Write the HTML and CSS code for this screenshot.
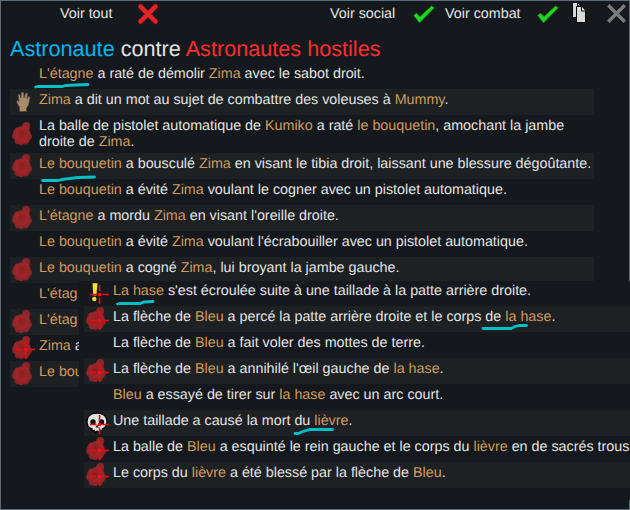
FILE: index.html
```
<!DOCTYPE html>
<html lang="fr">
<head>
<meta charset="utf-8">
<title>Journal de combat</title>
<link rel="stylesheet" href="styles.css">
</head>
<body>
<svg width="0" height="0" class="defs">
  <defs>
    <radialGradient id="bloodFill"><stop offset="0" stop-color="#8c1f22"/><stop offset=".6" stop-color="#9c2629"/><stop offset="1" stop-color="#8a2428"/></radialGradient>
    <symbol id="blood" viewBox="0 0 26 26">
      <path d="M12.500 5.500C12.300 2.800 14 1.300 16.500 1.300C19.200 1.300 20.300 3.500 19.600 6C19.500 7.500 18.800 8 19.200 9.500C20.300 10.500 19.800 12 20.500 13C22 14.500 21.800 17.500 19.800 18.800C18.800 20 18.800 21 17.800 22.200C16.500 23.800 15 22.800 13.800 22.500C12.500 24.300 10 24 9 22.800C7.500 23.600 5 22.600 5.200 20.500C5.300 19.500 4.500 18.500 4 17.800C2.300 17 2 14.500 3 13C3.300 11.800 3.500 10.500 4.300 9.500C4.800 7.300 6.500 6.600 8.200 6.800C9.500 5.600 11 5.500 12.500 5.500Z" fill="url(#bloodFill)" stroke="#8a2428" stroke-width=".8"/>
    </symbol>
    <symbol id="hand" viewBox="0 0 26 26">
      <path d="M9.500 22.500V18.500L6.800 13.500Q6.200 11.500 7.800 11.500L9 12.500L8 6Q8.400 4.400 9.800 5.400L11 9L11.200 3.800Q12.400 2.300 13.700 3.800L14 9L15.500 4.300Q17 3.300 17.500 5L17 10L18.300 7.300Q20 6.800 20 8.700L18.500 16L16.500 19V22.500Z" fill="#a98a6b" stroke="#4a3c30" stroke-width=".6"/>
    </symbol>
    <symbol id="alert" viewBox="0 0 26 26">
      <path d="M8.500 3.300H13.500L12.400 15.500H9.300Z" fill="#fbdf35"/><circle cx="10.300" cy="19" r="2.200" fill="#fbd535"/>
    </symbol>
    <symbol id="skull" viewBox="0 0 26 26">
      <path d="M13 3C6.500 3 3 6.500 3 11.500C3 15.500 5 18 8 18.800L8.500 21.500L10 20.500L11.500 22.500L13.200 21L15 22.500L16.500 20.500L18 21.500L18.500 18.800C21.500 18 23 15.500 23 11.500C23 6.500 19 3 13 3Z" fill="#e2e2e2" stroke="#050505" stroke-width="1.300"/>
      <circle cx="9" cy="12" r="2.700" fill="#080808"/><circle cx="17.500" cy="12" r="2.700" fill="#080808"/><path d="M13.200 14.500L11.500 17.500H14.800Z" fill="#111"/>
    </symbol>
    <symbol id="cross" viewBox="0 0 26 26">
      <rect x="14.800" y="5" width="1.600" height="6.500" fill="#ec0a0e"/>
      <rect x="14.800" y="17.500" width="1.600" height="6.500" fill="#ec0a0e"/>
      <rect x="6" y="13.700" width="6.500" height="1.600" fill="#ec0a0e"/>
      <rect x="18.500" y="13.700" width="6.500" height="1.600" fill="#ec0a0e"/>
      <rect x="14" y="13" width="3" height="3" fill="#f80c10"/>
    </symbol>
    <symbol id="check" viewBox="0 0 24 22">
      <path d="M1.500 11.500L4.500 9L8 12.500L19.500 1.800L22.500 3.800L7.500 19Z" fill="#22d722" stroke="#0c6513" stroke-width=".9"/>
    </symbol>
  </defs>
</svg>
<main class="window">
  <header class="bar">
    <span class="label all">Voir tout</span>
    <svg class="no" viewBox="0 0 22 22"><path d="M3.500 3.500L18.500 18.500M18.500 3.500L3.500 18.500" stroke="#6e1215" stroke-width="5.600" stroke-linecap="round"/><path d="M3.500 3.500L18.500 18.500M18.500 3.500L3.500 18.500" stroke="#df2528" stroke-width="4.200" stroke-linecap="round"/></svg>
    <span class="label social">Voir social</span>
    <svg class="yes"><use href="#check"/></svg>
    <span class="label combat">Voir combat</span>
    <svg class="yes"><use href="#check"/></svg>
    <svg class="copy" viewBox="0 0 14 21"><path d="M.5 .5H5.500L9 4V15.500H.5Z" fill="#d6d6d6" stroke="#000"/><path d="M5.500 .5V4H9" fill="none" stroke="#000"/><path d="M4.500 4.500H9.500L13.500 9V20.500H4.500Z" fill="#dadada" stroke="#000"/><path d="M9.500 4.500V9H13.500" fill="#eee" stroke="#000"/></svg>
    <svg class="close" viewBox="0 0 19 19"><path d="M2.500 2.500L16.500 16.500M16.500 2.500L2.500 16.500" stroke="#7b7c7e" stroke-width="3.400" stroke-linecap="square"/></svg>
  </header>
  <h1 class="title"><span class="ally">Astronaute</span> contre <span class="foe">Astronautes hostiles</span></h1>
  <section class="log">
    <div class="row"><i class="icon"></i><p><b>L'étagne</b> a raté de démolir <b>Zima</b> avec le sabot droit.</p></div>
    <div class="row alt"><svg class="icon"><use href="#hand"/></svg><p><b>Zima</b> a dit un mot au sujet de combattre des voleuses à <b>Mummy</b>.</p></div>
    <div class="row tall"><svg class="icon"><use href="#blood"/></svg><p>La balle de pistolet automatique de <b>Kumiko</b> a raté <b>le bouquetin</b>, amochant la jambe<br>droite de <b>Zima</b>.</p></div>
    <div class="row alt"><svg class="icon"><use href="#blood"/></svg><p><b>Le bouquetin</b> a bousculé <b>Zima</b> en visant le tibia droit, laissant une blessure dégoûtante.</p></div>
    <div class="row"><i class="icon"></i><p><b>Le bouquetin</b> a évité <b>Zima</b> voulant le cogner avec un pistolet automatique.</p></div>
    <div class="row alt"><svg class="icon"><use href="#blood"/></svg><p><b>L'étagne</b> a mordu <b>Zima</b> en visant l'oreille droite.</p></div>
    <div class="row"><i class="icon"></i><p><b>Le bouquetin</b> a évité <b>Zima</b> voulant l'écrabouiller avec un pistolet automatique.</p></div>
    <div class="row alt"><svg class="icon"><use href="#blood"/></svg><p><b>Le bouquetin</b> a cogné <b>Zima</b>, lui broyant la jambe gauche.</p></div>
    <div class="row cut"><i class="icon"></i><p><b>L'étag</b></p></div>
    <div class="row alt cut"><svg class="icon"><use href="#blood"/></svg><p><b>L'étag</b></p></div>
    <div class="row cut"><svg class="icon"><use href="#blood"/><use href="#cross"/></svg><p><b>Zima</b> a</p></div>
    <div class="row alt cut"><svg class="icon"><use href="#blood"/></svg><p><b>Le bou</b></p></div>
  </section>
</main>
<section class="overlay">
  <div class="row"><svg class="icon"><use href="#alert"/><use href="#cross"/></svg><p><b>La hase</b> s'est écroulée suite à une taillade à la patte arrière droite.</p></div>
  <div class="row alt"><svg class="icon"><use href="#blood"/><use href="#cross"/></svg><p>La flèche de <b>Bleu</b> a percé la patte arrière droite et le corps de <b>la hase</b>.</p></div>
  <div class="row"><i class="icon"></i><p>La flèche de <b>Bleu</b> a fait voler des mottes de terre.</p></div>
  <div class="row alt"><svg class="icon"><use href="#blood"/><use href="#cross"/></svg><p>La flèche de <b>Bleu</b> a annihilé l'œil gauche de <b>la hase</b>.</p></div>
  <div class="row"><i class="icon"></i><p><b>Bleu</b> a essayé de tirer sur <b>la hase</b> avec un arc court.</p></div>
  <div class="row alt"><svg class="icon"><use href="#skull"/><use href="#cross"/></svg><p>Une taillade a causé la mort du <b>lièvre</b>.</p></div>
  <div class="row"><svg class="icon"><use href="#blood"/><use href="#cross"/></svg><p>La balle de <b>Bleu</b> a esquinté le rein gauche et le corps du <b>lièvre</b> en de sacrés trous</p></div>
  <div class="row alt"><svg class="icon"><use href="#blood"/><use href="#cross"/></svg><p>Le corps du <b>lièvre</b> a été blessé par la flèche de <b>Bleu</b>.</p></div>
</section>
<svg class="marks" viewBox="0 0 630 510">
  <path d="M35.500 87L38 86.500L62 86.500L66 85.500L76 85L88 84.500"/>
  <path d="M42.500 180.500H58L62 179.500L70 178.500L78 177.500L94.500 177"/>
  <path d="M117.500 304L120 303.500H140L144 302L153 301.500"/>
  <path d="M483 328.500H511L515 326.500L520 325.500H526.500"/>
  <path d="M295 433.500H298L303 431.500L310 429.500H332.500"/>
</svg>
</body>
</html>
```
FILE: styles.css
```
* { box-sizing: border-box; }
body {
  margin: 0;
  width: 630px;
  height: 510px;
  overflow: hidden;
  position: relative;
  background: #15191d;
  color: #e3e3e3;
  font: 14.32px/16px "Liberation Sans", Arial, sans-serif;
  text-rendering: geometricPrecision;
}
.defs { position: absolute; }
.window {
  height: 510px;
  border: 1px solid #5f6b7b;
  padding-left: 9px;
}
.bar {
  display: flex;
  height: 36px;
  align-items: flex-start;
  white-space: nowrap;
}
.bar svg { flex: none; }
.label { padding-top: 5px; }
.all { width: 77px; margin-left: 50px; }
.no { width: 22px; height: 22px; margin-top: 2px; }
.social { width: 82px; margin-left: 171px; }
.yes { width: 24px; height: 22px; margin-top: 3px; }
.combat { width: 91px; margin-left: 9px; }
.copy { width: 14px; height: 21px; margin: 1px 0 0 12px; }
.close { width: 19px; height: 19px; margin: 3px 0 0 21px; }
.title {
  margin: 0;
  height: 26px;
  font-size: 21.65px;
  line-height: 24px;
  font-weight: normal;
  white-space: nowrap;
}
.ally { color: #00b4f0; }
.foe { color: #fb2c30; }
.log { width: 584px; }
.row {
  display: flex;
  height: 26px;
  white-space: nowrap;
}
.tall { height: 38px; }
.tall .icon { margin-top: 6px; }
.alt { background: #1d2124; }
.cut { width: 69px; overflow: hidden; }
.icon { width: 26px; height: 26px; flex: none; }
.row p { margin: 0; padding: 3px 0 0 3px; }
.row b { font-weight: normal; color: #d09a5b; }
.overlay {
  position: absolute;
  left: 79px;
  top: 281px;
  width: 551px;
  height: 219px;
  padding-left: 5px;
  background: #15191d;
  overflow: hidden;
}
.overlay .row:first-child { height: 25px; }
.overlay .row:first-child .icon,
.overlay .row:first-child p { margin-top: -1px; }
.marks {
  position: absolute;
  left: 0;
  top: 0;
  width: 630px;
  height: 510px;
  fill: none;
  stroke: #00bfc7;
  stroke-width: 2.800;
  stroke-linecap: round;
}
```
